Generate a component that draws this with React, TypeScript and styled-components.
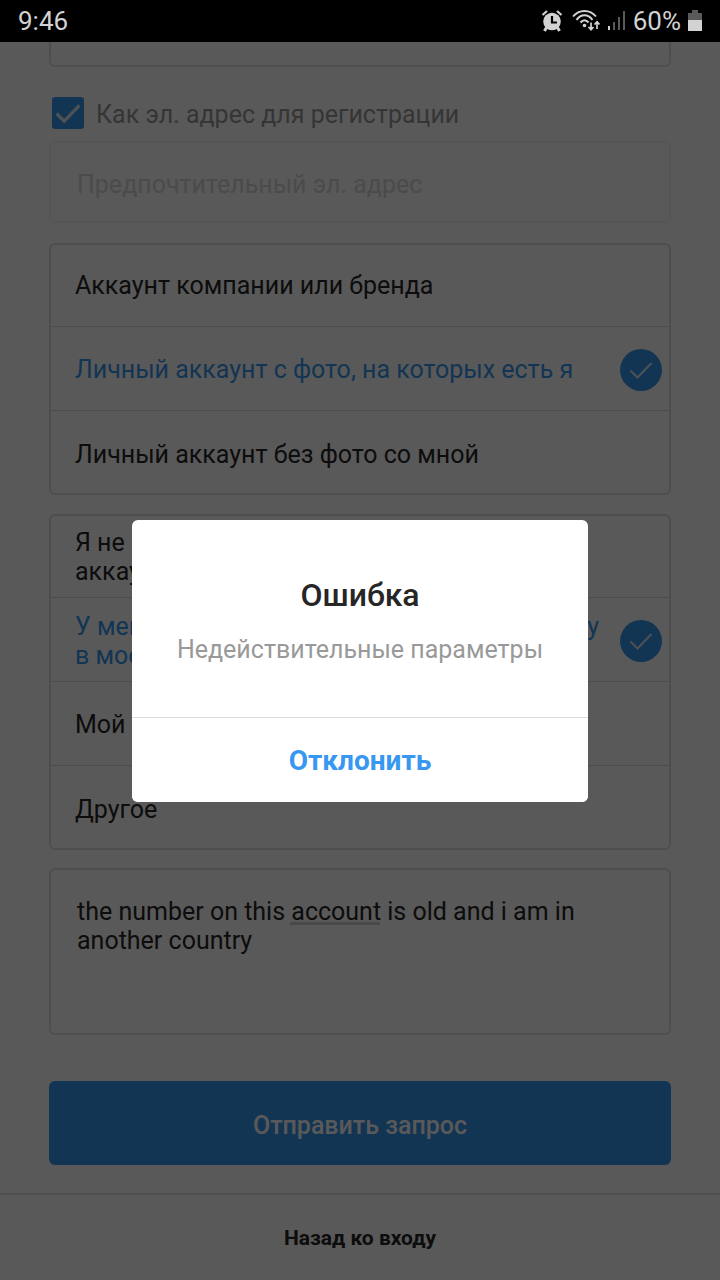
import React from "react";
import styled, { createGlobalStyle } from "styled-components";

const GlobalStyle = createGlobalStyle`
  *, *::before, *::after { box-sizing: border-box; }
  html, body, #root { height: 100%; }
  body {
    margin: 0;
    background: #fff;
    color: #262626;
    font: 400 25px/29px Roboto, "Liberation Sans", sans-serif;
  }
  button, input, textarea { font: inherit; color: inherit; margin: 0; }
`;

const blue = "#3897f0";
const line = "#e0e0e0";

const Screen = styled.div`
  display: flex;
  flex-direction: column;
  min-height: 100%;
`;

const StatusBar = styled.header`
  display: flex;
  align-items: center;
  justify-content: space-between;
  height: 42px;
  padding: 0 18px;
  background: #000;
  color: #d2d2d2;
  font-size: 26px;
`;

const StatusIcons = styled.div`
  display: flex;
  align-items: center;
  gap: 7px;
`;

const Content = styled.div`
  position: relative;
  display: flex;
  flex-direction: column;
  flex: 1;
`;

const Form = styled.form`
  display: flex;
  flex-direction: column;
  flex: 1;
  padding: 0 49px 28px;
`;

const Field = styled.input`
  width: 100%;
  height: 82px;
  padding: 4px 26px 0;
  border: 2px solid #f4f4f4;
  border-radius: 6px;
  background: #fefefe;
  outline: 0;
  &::placeholder { color: #d6d6d6; opacity: 1; }
`;

const ClippedField = styled(Field)`
  height: 25px;
  padding: 0 26px;
  border-color: ${line};
  border-top: 0;
  border-radius: 0 0 6px 6px;
  background: #fff;
`;

const CheckRow = styled.label`
  display: flex;
  align-items: center;
  gap: 12px;
  margin: 30px 3px 12px;
  color: #999;
`;

const CheckText = styled.span`
  padding-top: 2px;
`;

const MarkBox = styled.span`
  display: grid;
  flex: none;
  place-items: center;
  & > * { grid-area: 1 / 1; }
  svg { pointer-events: none; }
`;

const CheckInput = styled.input`
  appearance: none;
  width: 32px;
  height: 32px;
  border-radius: 3px;
  background: ${blue};
`;

const RadioInput = styled.input`
  appearance: none;
  width: 42px;
  height: 42px;
  border-radius: 50%;
  & + svg { visibility: hidden; }
  &:checked { background: ${blue}; }
  &:checked + svg { visibility: visible; }
`;

const OptionGroup = styled.fieldset`
  min-width: 0;
  margin: 20px 0 0;
  padding: 0;
  border: 0;
  border-radius: 6px;
  box-shadow: inset 0 0 0 2px ${line};
  & + & { margin-top: 19px; }
`;

const OptionRow = styled.label<{ $selected: boolean }>`
  display: flex;
  align-items: center;
  justify-content: space-between;
  height: 84px;
  padding: 2px 9px 0 26px;
  color: ${(p) => (p.$selected ? blue : "#262626")};
  &:not(:last-child) { border-bottom: 1px solid #dbdbdb; }
`;

const OptionText = styled.span`
  white-space: pre;
`;

const MessageBox = styled.div`
  position: relative;
  display: flex;
  margin-top: 18px;
`;

const Message = styled.textarea`
  display: block;
  width: 100%;
  height: 167px;
  padding: 27px 26px;
  border: 2px solid ${line};
  border-radius: 6px;
  background: transparent;
  outline: 0;
  resize: none;
`;

const SpellMark = styled.span`
  position: absolute;
  left: 241px;
  top: 54px;
  width: 90px;
  height: 3px;
  background: #d2d2d2;
`;

const SubmitButton = styled.button`
  height: 84px;
  margin-top: 46px;
  padding: 4px 0 0;
  border: 0;
  border-radius: 6px;
  background: ${blue};
  color: #fff;
  font-weight: 500;
`;

const Footer = styled.footer`
  display: flex;
  align-items: center;
  justify-content: center;
  height: 87px;
  padding-top: 2px;
  border-top: 2px solid ${line};
`;

const FooterLink = styled.a`
  color: #262626;
  font-size: 21px;
  font-weight: 700;
  text-decoration: none;
`;

const Scrim = styled.div`
  position: absolute;
  inset: 0;
  display: flex;
  align-items: center;
  justify-content: center;
  padding: 0 24px;
  background: rgba(0, 0, 0, 0.65);
`;

const Dialog = styled.section`
  width: 100%;
  max-width: 456px;
  border-radius: 6px;
  background: #fff;
  text-align: center;
  overflow: hidden;
`;

const DialogBody = styled.div`
  padding: 55px 24px 51px;
`;

const DialogTitle = styled.h2`
  margin: 0 0 18px;
  font-size: 32px;
  line-height: 40px;
  font-weight: 500;
`;

const DialogText = styled.p`
  margin: 0;
  padding: 2px 0;
  color: #999;
`;

const DialogButton = styled.button`
  display: block;
  width: 100%;
  height: 85px;
  padding: 0;
  border: 0;
  border-top: 1px solid #dbdbdb;
  background: #fff;
  color: ${blue};
  font-size: 28px;
  font-weight: 700;
`;

const AlarmIcon = () => (
  <svg width="24" height="24" viewBox="0 0 24 24" fill="none" aria-hidden="true">
    <path d="M2.500 6 7 2M21.500 6 17 2" stroke="#d2d2d2" strokeWidth="2.200" />
    <circle cx="12" cy="12.500" r="8.800" fill="#d2d2d2" />
    <path d="M6.500 18.500 4.500 22M17.500 18.500l2 3.500" stroke="#d2d2d2" strokeWidth="3" />
    <path d="M12 7v6.500h5" stroke="#000" strokeWidth="2.200" />
  </svg>
);

const WifiIcon = () => (
  <svg width="29" height="24" viewBox="0 0 29 24" fill="none" stroke="#d2d2d2" strokeWidth="2" aria-hidden="true">
    <path d="M2 7.500C8 0 19 0 25 7.500M5.500 11C10 4.800 17 4.800 21.500 11M9.500 13.500c2.500-3 5.500-3 8 0" />
    <circle cx="13.500" cy="16.500" r="1.800" fill="#d2d2d2" stroke="none" />
    <path d="M20 13.500v7M17.500 18l2.500 2.700 2.500-2.700M26 20v-7M23.500 15.500l2.500-2.700 2.500 2.700" strokeWidth="1.700" />
  </svg>
);

const SignalIcon = () => (
  <svg width="19" height="22" viewBox="0 0 19 22" aria-hidden="true">
    <path d="M1 16h2v4H1z" fill="#d2d2d2" />
    <path d="M6 12h2v8H6zM11 7h2v13h-2zM16 1h2v19h-2z" fill="#5a5a5a" />
  </svg>
);

const BatteryIcon = () => (
  <svg width="14" height="22" viewBox="0 0 14 22" aria-hidden="true">
    <path d="M4 0h6v3h4v8H0V3h4z" fill="#5a5a5a" />
    <path d="M0 10h14v11H0z" fill="#d2d2d2" />
  </svg>
);

const CheckMark = ({ size, width }: { size: number; width: number }) => (
  <svg width={size} height={size} viewBox="0 0 24 24" fill="none" stroke="#dde8f0" strokeWidth={width} aria-hidden="true">
    <path d="M1.500 12.500 8.500 19.500 22.500 5" />
  </svg>
);

const accountTypes = [
  "Аккаунт компании или бренда",
  "Личный аккаунт с фото, на которых есть я",
  "Личный аккаунт без фото со мной",
];

const reasons = [
  "Я не могу войти в эл. почту моего\nаккаунта",
  "У меня нет доступа к эл. адресу, указанному\nв моем аккаунте",
  "Мой аккаунт взломан",
  "Другое",
];

function Options({ name, label, items, initial }: { name: string; label: string; items: string[]; initial: number }) {
  const [selected, setSelected] = React.useState(initial);
  return (
    <OptionGroup aria-label={label}>
      {items.map((item, i) => (
        <OptionRow key={item} $selected={i === selected}>
          <OptionText>{item}</OptionText>
          <MarkBox>
            <RadioInput type="radio" name={name} checked={i === selected} onChange={() => setSelected(i)} />
            <CheckMark size={24} width={2} />
          </MarkBox>
        </OptionRow>
      ))}
    </OptionGroup>
  );
}

export default function App() {
  return (
    <>
      <GlobalStyle />
      <Screen>
        <StatusBar>
          <span>9:46</span>
          <StatusIcons>
            <AlarmIcon />
            <WifiIcon />
            <SignalIcon />
            <span>60%</span>
            <BatteryIcon />
          </StatusIcons>
        </StatusBar>
        <Content>
          <Form>
            <ClippedField type="email" aria-label="Эл. адрес" />
            <CheckRow>
              <MarkBox>
                <CheckInput type="checkbox" defaultChecked />
                <CheckMark size={26} width={3} />
              </MarkBox>
              <CheckText>Как эл. адрес для регистрации</CheckText>
            </CheckRow>
            <Field type="email" aria-label="Предпочтительный эл. адрес" placeholder="Предпочтительный эл. адрес" />
            <Options name="account" label="Тип аккаунта" items={accountTypes} initial={1} />
            <Options name="reason" label="Причина" items={reasons} initial={1} />
            <MessageBox>
              <Message
                aria-label="Сообщение"
                spellCheck={false}
                defaultValue={"the number on this account is old and i am in another country"}
              />
              <SpellMark />
            </MessageBox>
            <SubmitButton type="button">Отправить запрос</SubmitButton>
          </Form>
          <Footer>
            <FooterLink href="#login">Назад ко входу</FooterLink>
          </Footer>
          <Scrim>
            <Dialog role="alertdialog" aria-labelledby="error-title">
              <DialogBody>
                <DialogTitle id="error-title">Ошибка</DialogTitle>
                <DialogText>Недействительные параметры</DialogText>
              </DialogBody>
              <DialogButton type="button">Отклонить</DialogButton>
            </Dialog>
          </Scrim>
        </Content>
      </Screen>
    </>
  );
}
